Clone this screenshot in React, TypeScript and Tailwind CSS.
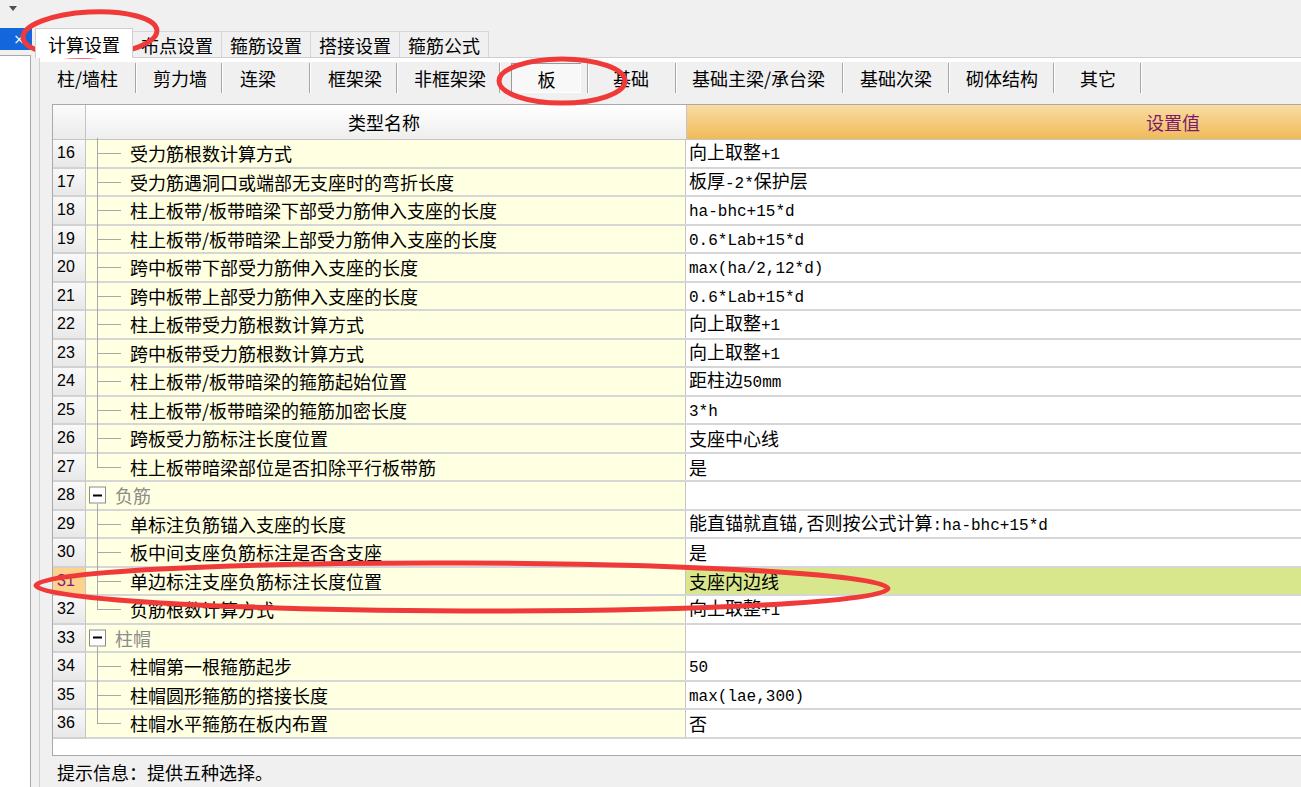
import React from 'react';

type Row = {
  no: number;
  name: string;
  value?: string;
  group?: boolean;
  last?: boolean;
  selected?: boolean;
};

const topTabs = ['计算设置', '布点设置', '箍筋设置', '搭接设置', '箍筋公式'];

const cats = [
  { label: '柱/墙柱', w: 'w-[97px]', pl: 'pl-[17px]' },
  { label: '剪力墙', w: 'w-[86px]', pl: 'pl-[16px]' },
  { label: '连梁', w: 'w-[88px]', pl: 'pl-[17px]' },
  { label: '框架梁', w: 'w-[87px]', pl: 'pl-[17px]' },
  { label: '非框架梁', w: 'w-[103px]', pl: 'pl-[16px]' },
  { label: '板', w: 'w-[88px]', pl: 'pl-[10px]', active: true },
  { label: '基础', w: 'w-[88px]', pl: 'pl-[24px]' },
  { label: '基础主梁/承台梁', w: 'w-[167px]', pl: 'pl-[15px]' },
  { label: '基础次梁', w: 'w-[106px]', pl: 'pl-[16px]' },
  { label: '砌体结构', w: 'w-[105px]', pl: 'pl-[16px]' },
  { label: '其它', w: 'w-[87px]', pl: 'pl-[25px]' },
];

const rows: Row[] = [
  { no: 16, name: '受力筋根数计算方式', value: '向上取整+1' },
  { no: 17, name: '受力筋遇洞口或端部无支座时的弯折长度', value: '板厚-2*保护层' },
  { no: 18, name: '柱上板带/板带暗梁下部受力筋伸入支座的长度', value: 'ha-bhc+15*d' },
  { no: 19, name: '柱上板带/板带暗梁上部受力筋伸入支座的长度', value: '0.6*Lab+15*d' },
  { no: 20, name: '跨中板带下部受力筋伸入支座的长度', value: 'max(ha/2,12*d)' },
  { no: 21, name: '跨中板带上部受力筋伸入支座的长度', value: '0.6*Lab+15*d' },
  { no: 22, name: '柱上板带受力筋根数计算方式', value: '向上取整+1' },
  { no: 23, name: '跨中板带受力筋根数计算方式', value: '向上取整+1' },
  { no: 24, name: '柱上板带/板带暗梁的箍筋起始位置', value: '距柱边50mm' },
  { no: 25, name: '柱上板带/板带暗梁的箍筋加密长度', value: '3*h' },
  { no: 26, name: '跨板受力筋标注长度位置', value: '支座中心线' },
  { no: 27, name: '柱上板带暗梁部位是否扣除平行板带筋', value: '是', last: true },
  { no: 28, name: '负筋', group: true },
  { no: 29, name: '单标注负筋锚入支座的长度', value: '能直锚就直锚,否则按公式计算:ha-bhc+15*d' },
  { no: 30, name: '板中间支座负筋标注是否含支座', value: '是' },
  { no: 31, name: '单边标注支座负筋标注长度位置', value: '支座内边线', selected: true },
  { no: 32, name: '负筋根数计算方式', value: '向上取整+1', last: true },
  { no: 33, name: '柱帽', group: true },
  { no: 34, name: '柱帽第一根箍筋起步', value: '50' },
  { no: 35, name: '柱帽圆形箍筋的搭接长度', value: 'max(lae,300)' },
  { no: 36, name: '柱帽水平箍筋在板内布置', value: '否', last: true },
];

// ASCII runs are drawn in a narrow monospace face, like the half-width glyphs of the original
function Value({ text }: { text: string }) {
  const parts = text.match(/[\x20-\x7e]+|[^\x20-\x7e]+/g) ?? [];
  return (
    <span>
      {parts.map((p, i) =>
        /^[\x20-\x7e]+$/.test(p) ? (
          <span key={i} className="font-['Liberation_Mono',monospace] text-[16px]">
            {p}
          </span>
        ) : (
          <span key={i}>{p}</span>
        )
      )}
    </span>
  );
}

function TreeCell({ row }: { row: Row }) {
  if (row.group) {
    return (
      <div className="relative flex h-full w-[600px] items-center border-r border-[#c4c4c4] bg-[#ffffe1] pl-[29px] text-[#8c8c8c]">
        <div className="absolute left-[3px] top-1/2 flex h-[17px] w-[17px] -translate-y-1/2 items-center justify-center border border-[#8c8c8c] bg-white">
          <div className="h-[2px] w-[9px] bg-black" />
        </div>
        <div className="absolute bottom-[-2px] left-[11px] top-[calc(50%+9px)] w-px bg-[#a8a8a8]" />
        {row.name}
      </div>
    );
  }
  return (
    <div className="relative flex h-full w-[600px] items-center border-r border-[#c4c4c4] bg-[#ffffe1] pl-[44px]">
      <div
        className={
          row.last
            ? 'absolute left-[11px] top-[-2px] h-[calc(50%+2px)] w-px bg-[#a8a8a8]'
            : 'absolute bottom-[-2px] left-[11px] top-[-2px] w-px bg-[#a8a8a8]'
        }
      />
      <div className="absolute left-[11px] top-1/2 h-px w-[24px] bg-[#a8a8a8]" />
      {row.name}
    </div>
  );
}

function Overlay() {
  return (
    <svg className="pointer-events-none absolute left-0 top-0" width="1301" height="787">
      <g fill="none" stroke="#f03a3a" strokeWidth="5">
        <ellipse cx="90" cy="34" rx="67" ry="22" transform="rotate(-3 90 34)" />
        <ellipse cx="562" cy="81" rx="63" ry="22" />
        <ellipse cx="462" cy="587" rx="426" ry="24" transform="rotate(0.2 462 587)" />
      </g>
    </svg>
  );
}

export default function App() {
  return (
    <div className="relative h-[787px] w-[1301px] overflow-hidden bg-[#f0f0f0] font-['Noto_Sans_CJK_SC',sans-serif] text-[18px] leading-[22px] text-black">
      {/* top strip */}
      <div className="h-[28px] pl-[9px] pt-[6px]">
        <div className="h-0 w-0 border-x-[4px] border-t-[5px] border-x-transparent border-t-[#505050]" />
      </div>

      <div className="flex h-[759px]">
        {/* left docked pane */}
        <div className="flex w-[32px] flex-col">
          <div className="flex h-[22px] items-center justify-end bg-[#1366dc] pr-[7px] font-['DejaVu_Sans',sans-serif] text-[14px] text-white">
            ×
          </div>
          <div className="h-[5px]" />
          <div className="w-[31px] flex-1 border-r border-t border-[#a8a8a8] bg-white" />
        </div>

        {/* tab control */}
        <div className="flex min-w-0 flex-1 flex-col">
          <div className="flex h-[29px] items-end pl-[3px]">
            {topTabs.map((t, i) =>
              i === 0 ? (
                <div
                  key={t}
                  className="relative z-10 -mb-px flex h-[30px] w-[98px] items-center justify-center border-x border-t border-[#cfcfcf] bg-white"
                >
                  {t}
                </div>
              ) : (
                <div
                  key={t}
                  className="flex h-[26px] w-[89px] items-center justify-center border-r border-t border-[#d6d6d6] bg-[#f0f0f0]"
                >
                  {t}
                </div>
              )
            )}
          </div>

          <div className="ml-[7px] flex flex-1 flex-col border-l border-t border-[#cfcfcf]">
            <div className="h-[4px] bg-white" />

            {/* category buttons */}
            <div className="flex h-[32px] items-center">
              {cats.map((c) => (
                <div key={c.label} className={`flex h-full shrink-0 items-center ${c.w}`}>
                  {c.active ? (
                    <div className="ml-[10px] flex h-[30px] w-[70px] items-center justify-center border-l border-t border-[#9a9a9a] bg-[#f8f8f8] shadow-[inset_-1px_-1px_0_#ffffff]">
                      {c.label}
                    </div>
                  ) : (
                    <span className={c.pl}>{c.label}</span>
                  )}
                  <div className="ml-auto h-[30px] w-[2px] border-l border-[#a6a6a6] bg-white" />
                </div>
              ))}
            </div>
            <div className="h-[10px]" />

            {/* grid */}
            <div className="ml-[12px] flex h-[652px] w-[1608px] flex-col border-l border-t border-b border-[#a9a9a9] bg-white">
              <div className="flex h-[35px] shrink-0 border-b border-[#c4c4c4]">
                <div className="w-[33px] border-r border-[#c4c4c4] bg-linear-to-b from-[#fbfbfb] to-[#ebebeb]" />
                <div className="flex w-[601px] items-center justify-center border-r border-[#c4c4c4] bg-linear-to-b from-[#ffffff] to-[#eeeeee] pr-[4px]">
                  类型名称
                </div>
                <div className="flex w-[972px] items-center justify-center bg-linear-to-b from-[#fadca2] to-[#efbb58] text-[#7a1a6e]">
                  设置值
                </div>
              </div>

              {rows.map((r) => (
                <div key={r.no} className="flex h-[28.5px] shrink-0">
                  <div
                    className={
                      r.selected
                        ? 'flex w-[33px] items-center border-b-2 border-r border-[#d2d2d2] border-r-[#c4c4c4] bg-[#fdd38c] pl-[4px] font-["Liberation_Sans",sans-serif] text-[16px] text-[#7a1a7a]'
                        : 'flex w-[33px] items-center border-b-2 border-r border-[#d2d2d2] border-r-[#c4c4c4] bg-linear-to-b from-[#f9f9f9] to-[#e8e8e8] pl-[4px] font-["Liberation_Sans",sans-serif] text-[16px]'
                    }
                  >
                    {r.no}
                  </div>
                  <div className="h-full border-b-2 border-[#d6d6d6]">
                    <TreeCell row={r} />
                  </div>
                  <div
                    className={
                      r.selected
                        ? 'flex w-[972px] items-center border-b-2 border-[#d6d6d6] bg-[#d8e78c] pl-[3px]'
                        : 'flex w-[972px] items-center border-b-2 border-[#d6d6d6] bg-white pl-[3px]'
                    }
                  >
                    {r.value ? <Value text={r.value} /> : null}
                  </div>
                </div>
              ))}
              <div className="flex-1 bg-white" />
            </div>

            <div className="flex h-[31px] items-center pl-[17px]">提示信息：提供五种选择。</div>
          </div>
        </div>
      </div>

      <Overlay />
    </div>
  );
}
